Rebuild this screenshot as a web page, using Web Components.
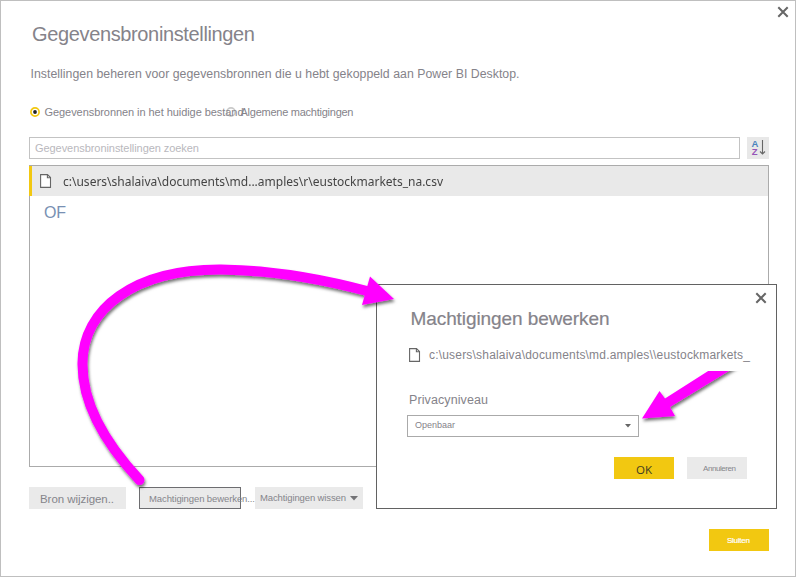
<!DOCTYPE html>
<html lang="nl"><head><meta charset="utf-8"><title>Gegevensbroninstellingen</title>
<style>html,body{margin:0;width:796px;height:577px;overflow:hidden;background:#fff}</style></head>
<body><source-settings></source-settings>
<script>
const define = (name, html, setup) => customElements.define(name, class extends HTMLElement {
  connectedCallback() {
    if (this.shadowRoot) return;
    this.attachShadow({mode: 'open'}).innerHTML = html;
    if (setup) setup(this, this.shadowRoot);
  }
});

// One line of text fitted to a width, by tracking or (with "squeeze") by glyph width.
define('fit-text', `<style>:host{display:block;white-space:nowrap;flex:none}span{display:inline-block;white-space:pre;transform-origin:0 0}</style><span></span>`, (el, root) => {
  const s = root.querySelector('span');
  s.textContent = el.getAttribute('text');
  const w = +el.getAttribute('w');
  s.style.fontSize = el.getAttribute('size') + 'px';
  s.style.lineHeight = (el.getAttribute('lh') || 20) + 'px';
  el.style.height = (el.getAttribute('lh') || 20) + 'px';
  el.style.width = w + 'px';
  const natural = s.getBoundingClientRect().width;
  if (el.hasAttribute('squeeze')) s.style.transform = `scaleX(${w / natural})`;
  else s.style.letterSpacing = (w - natural) / (s.textContent.length - 1) + 'px';
});

define('file-icon', `<style>:host{display:block;width:12px;height:15px;flex:none}svg{display:block}</style>
<svg width="12" height="15" viewBox="0 0 12 15" fill="none" stroke="#666" stroke-width="1.1"><path d="M.6 .6H7.5L10.500 3.6V13.4H.6Z" fill="#fff"/><path d="M7.4 .6V3.7H10.500"/></svg>`);

define('close-icon', `<style>:host{display:block;width:12px;height:12px}svg{display:block}</style>
<svg width="12" height="12" viewBox="0 0 12 12" stroke="#666" stroke-width="2"><path d="M1.3 1.3L10.7 10.7M10.7 1.3L1.3 10.7"/></svg>`);

define('radio-dot', `<style>:host{display:block;width:10px;height:10px;flex:none}svg{display:block}</style>
<svg width="10" height="10" viewBox="0 0 10 10"></svg>`, (el, root) => {
  root.querySelector('svg').innerHTML = el.hasAttribute('checked')
    ? '<circle cx="5" cy="5" r="4.1" fill="#fff" stroke="#f2c811" stroke-width="1.7"/><circle cx="5" cy="5" r="1.9" fill="#222"/>'
    : '<circle cx="5" cy="5" r="4.1" fill="#fff" stroke="#c9c9c9" stroke-width="1.6"/>';
});

define('ui-button', `<style>
:host{display:flex;box-sizing:border-box;height:22px;flex:none;background:#eaeaea;color:#85858a}
:host([primary]){background:#f2c811;color:#fff}
:host([focused]){border:1px solid #6d6d70}
</style><slot></slot>`);

define('sort-button', `<style>:host{display:block;width:22px;height:22px;background:#e8e8e8}svg{display:block}text{font:bold 9.5px "Liberation Sans",Arial,sans-serif}</style>
<svg width="22" height="22" viewBox="0 0 22 22"><text x="4.5" y="9.700" fill="#4a84bd">A</text><text x="4.8" y="18" fill="#9655b8">Z</text><path d="M15.500 3V17M13 14.500L15.500 17L18 14.500" fill="none" stroke="#666" stroke-width="1.1"/></svg>`);

define('source-list', `<style>
:host{display:block;box-sizing:border-box;width:740px;height:302px;border:1px solid #ababab;background:#fff}
.row{display:flex;box-sizing:border-box;height:30px;margin-left:-1px;border-left:3px solid #f2c811;background:#e9e9e9;padding:8px 0 0 8px;color:#444;font-family:"Noto Sans","Open Sans",sans-serif}
.row fit-text{margin:-5px 0 0 10.5px}
.sub{margin:7px 0 0 14px;color:#7890b3}
</style>
<div class="row"><file-icon></file-icon><fit-text squeeze text="c:\\users\\shalaiva\\documents\\md...amples\\r\\eustockmarkets_na.csv" w="380" size="13"></fit-text></div>
<fit-text class="sub" text="OF" w="22" size="16"></fit-text>`);

define('permissions-dialog', `<style>
:host{display:flex;flex-direction:column;box-sizing:border-box;width:401px;height:225px;border:1px solid #626262;background:#fff;color:#85838a}
close-icon{align-self:flex-end;margin:7px 9px 0 0}
.title{margin:5px 0 0 33.5px;-webkit-text-stroke:.2px #85838a}
.path{display:flex;margin:16px 0 0 32px}.path file-icon{margin-top:3px}.path fit-text{margin-left:8px}
.label{margin:25px 0 0 32px}
.select{display:flex;box-sizing:border-box;width:232px;height:22px;margin:5px 0 0 30px;border:1px solid #aaa;padding:0 7px 0 7px;justify-content:space-between}
.select fit-text{margin-top:-2px}.select svg{margin-top:8px}
.actions{display:flex;gap:13px;margin:20px 0 0 237px}
ui-button{width:60px}.ok{color:#3d3c22;font-family:"Open Sans","Noto Sans",sans-serif}
</style>
<close-icon></close-icon>
<fit-text class="title" text="Machtigingen bewerken" w="199" size="19"></fit-text>
<div class="path"><file-icon></file-icon><fit-text text="c:\\users\\shalaiva\\documents\\md.amples\\\\eustockmarkets_" w="321" size="12"></fit-text></div>
<fit-text class="label" text="Privacyniveau" w="79" size="12.5"></fit-text>
<div class="select"><fit-text text="Openbaar" w="40" size="9" lh="17"></fit-text><svg width="6" height="4" viewBox="0 0 6 4"><path d="M0 0H6L3 3.500Z" fill="#666"/></svg></div>
<div class="actions"><ui-button primary class="ok"><fit-text style="margin-left:22px" text="OK" w="16" size="11.5" lh="20"></fit-text></ui-button>
<ui-button><fit-text style="margin-left:16px" text="Annuleren" w="33" size="8" lh="20"></fit-text></ui-button></div>`);

define('guide-arrows', `<style>:host{display:block;pointer-events:none}svg{display:block;overflow:visible}</style>
<svg width="796" height="577" viewBox="0 0 796 577">
<defs><filter id="s" x="-10%" y="-10%" width="120%" height="125%"><feDropShadow dx="1" dy="2.5" stdDeviation="1.7" flood-color="#000" flood-opacity=".55"/></filter><clipPath id="c"><rect x="620" y="371" width="140" height="70"/></clipPath></defs>
<g filter="url(#s)"><path d="M139.500 480C106 444 82 403 82.500 363C83 309 134 269 221 269.500C268 270 315 277 367 291" fill="none" stroke="#f0f" stroke-width="10" stroke-linecap="round"/><path d="M370 276.500L394 299L362 305Z" fill="#f0f"/></g>
<g clip-path="url(#c)"><path filter="url(#s)" d="M642 418.500L659.500 391L665 398.500L716 366L737 366L670 407L675 416Z" fill="#f0f"/></g>
</svg>`);

define('source-settings', `<style>
:host{display:flex;flex-direction:column;position:relative;box-sizing:border-box;width:796px;height:577px;border:1px solid #bfbfbf;background:#fff;color:#85838a;font-family:"Liberation Sans",Arial,sans-serif}
.close{align-self:flex-end;margin:5px 6px 0 0}
.title{margin:6px 0 0 31px}.desc{margin:20px 0 0 29.5px}
.radios{display:flex;align-items:center;margin:18px 0 0 29px;height:20px}
.radios .a{margin-left:4.500px;position:relative;z-index:1}.radios .second{margin-left:-18px}.radios .b{margin-left:5px}
.search{display:flex;gap:7px;margin:15px 0 0 28px}
.field{box-sizing:border-box;width:711px;height:22px;border:1px solid #c3c3c3;padding-left:5px;color:#b9b8bd}
source-list{margin:6px 0 0 28px}
.buttons{display:flex;margin:20px 0 0 28px}
.buttons svg{margin:9px 0 0 4px}
.done{margin:20px 26px 0 0;align-self:flex-end;width:60px;-webkit-text-stroke:.2px #fff}
permissions-dialog{position:absolute;left:375px;top:283px}
guide-arrows{position:absolute;left:-1px;top:-1px}
</style>
<close-icon class="close"></close-icon>
<fit-text class="title" text="Gegevensbroninstellingen" w="223" size="20"></fit-text>
<fit-text class="desc" text="Instellingen beheren voor gegevensbronnen die u hebt gekoppeld aan Power BI Desktop." w="489" size="12.3"></fit-text>
<div class="radios"><radio-dot checked></radio-dot><fit-text class="a" text="Gegevensbronnen in het huidige bestand" w="199" size="11"></fit-text><radio-dot class="second"></radio-dot><fit-text class="b" text="Algemene machtigingen" w="113" size="11"></fit-text></div>
<div class="search"><div class="field"><fit-text text="Gegevensbroninstellingen zoeken" w="164" size="11" lh="21"></fit-text></div><sort-button></sort-button></div>
<source-list></source-list>
<div class="buttons">
<ui-button style="width:97px"><fit-text style="margin-left:11px" text="Bron wijzigen.." w="74" size="11.5" lh="24"></fit-text></ui-button>
<ui-button focused style="width:102px;margin-left:13px"><fit-text style="margin-left:9px" text="Machtigingen bewerken..." w="106" size="9.5" lh="20"></fit-text></ui-button>
<ui-button style="width:108px;margin-left:14px"><fit-text style="margin-left:5px" text="Machtigingen wissen" w="86" size="9.5" lh="22"></fit-text><svg width="8" height="5" viewBox="0 0 8 5"><path d="M0 0H8L4 4.500Z" fill="#737376"/></svg></ui-button></div>
<ui-button primary class="done"><fit-text style="margin-left:18px" text="Sluiten" w="23" size="8" lh="22"></fit-text></ui-button>
<permissions-dialog></permissions-dialog><guide-arrows></guide-arrows>`);
</script></body></html>
